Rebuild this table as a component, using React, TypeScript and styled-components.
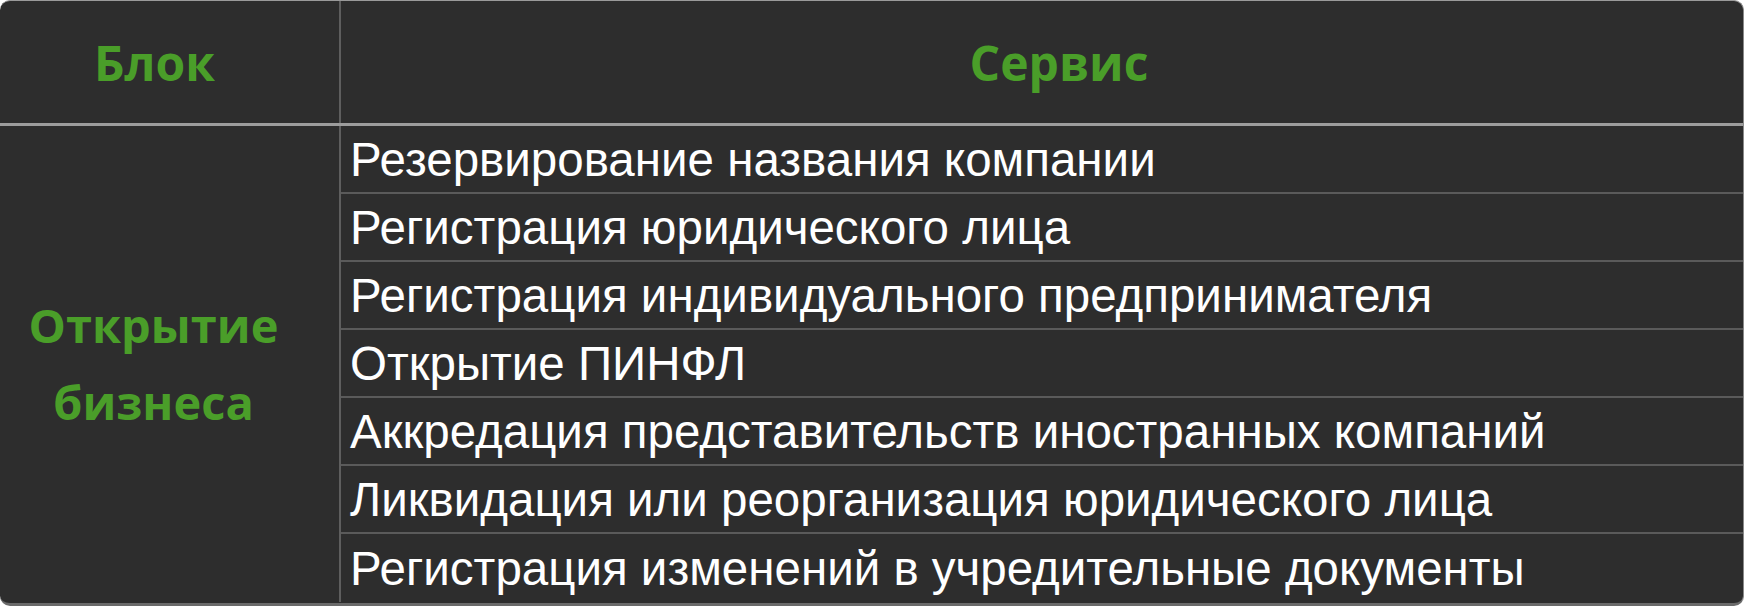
import React from "react";
import styled, { createGlobalStyle } from "styled-components";

const Global = createGlobalStyle`
  html, body { margin: 0; padding: 0; background: #ffffff; }
  body { width: 1745px; height: 607px; overflow: hidden; }
`;

const Card = styled.div`
  width: 1744px;
  height: 606px;
  box-sizing: border-box;
  background: #2d2d2d;
  border-radius: 10px;
  border-top: 1px solid #9a9a9a;
  border-right: 1px solid #8a8a8a;
  border-bottom: 3px solid #6a6a6a;
  overflow: hidden;
  display: grid;
  grid-template-columns: 341px 1fr;
  grid-template-rows: 122px 3px repeat(7, 68px);
`;

const HeadCell = styled.div<{ $shift: number }>`
  display: flex;
  align-items: center;
  justify-content: center;
  padding-left: ${(p) => (p.$shift > 0 ? p.$shift : 0)}px;
  padding-right: ${(p) => (p.$shift < 0 ? -p.$shift : 0)}px;
  font-family: "Open Sans", "Noto Sans", sans-serif;
  font-weight: 700;
  font-size: 48px;
  color: #4a9e29;
  border-right: ${(p) => (p.$shift < 0 ? "2px solid #5e5e5e" : "none")};
`;

const HeadRule = styled.div`
  grid-column: 1 / 3;
  background: #9c9c9c;
`;

const BlockCell = styled.div`
  grid-row: 3 / 10;
  grid-column: 1;
  border-right: 2px solid #5e5e5e;
  display: flex;
  align-items: center;
  justify-content: center;
  padding-right: 32px;
  text-align: center;
  font-family: "Open Sans", "Noto Sans", sans-serif;
  font-weight: 700;
  font-size: 47px;
  line-height: 77px;
  color: #4a9e29;
`;

const ServiceCell = styled.div<{ $last?: boolean }>`
  grid-column: 2;
  display: flex;
  align-items: center;
  box-sizing: border-box;
  padding-left: 9px;
  border-bottom: ${(p) => (p.$last ? "none" : "2px solid #5a5a5a")};
  font-family: "Liberation Sans", Arial, sans-serif;
  font-size: 47.5px;
  color: #ffffff;
  white-space: nowrap;
`;

const services = [
  "Резервирование названия компании",
  "Регистрация юридического лица",
  "Регистрация индивидуального предпринимателя",
  "Открытие ПИНФЛ",
  "Аккредация представительств иностранных компаний",
  "Ликвидация или реорганизация юридического лица",
  "Регистрация изменений в учредительные документы",
];

export default function App() {
  return (
    <>
      <Global />
      <Card>
        <HeadCell $shift={-30}>Блок</HeadCell>
        <HeadCell $shift={34}>Сервис</HeadCell>
        <HeadRule />
        <BlockCell>
          Открытие
          <br />
          бизнеса
        </BlockCell>
        {services.map((s, i) => (
          <ServiceCell key={s} $last={i === services.length - 1}>
            {s}
          </ServiceCell>
        ))}
      </Card>
    </>
  );
}
